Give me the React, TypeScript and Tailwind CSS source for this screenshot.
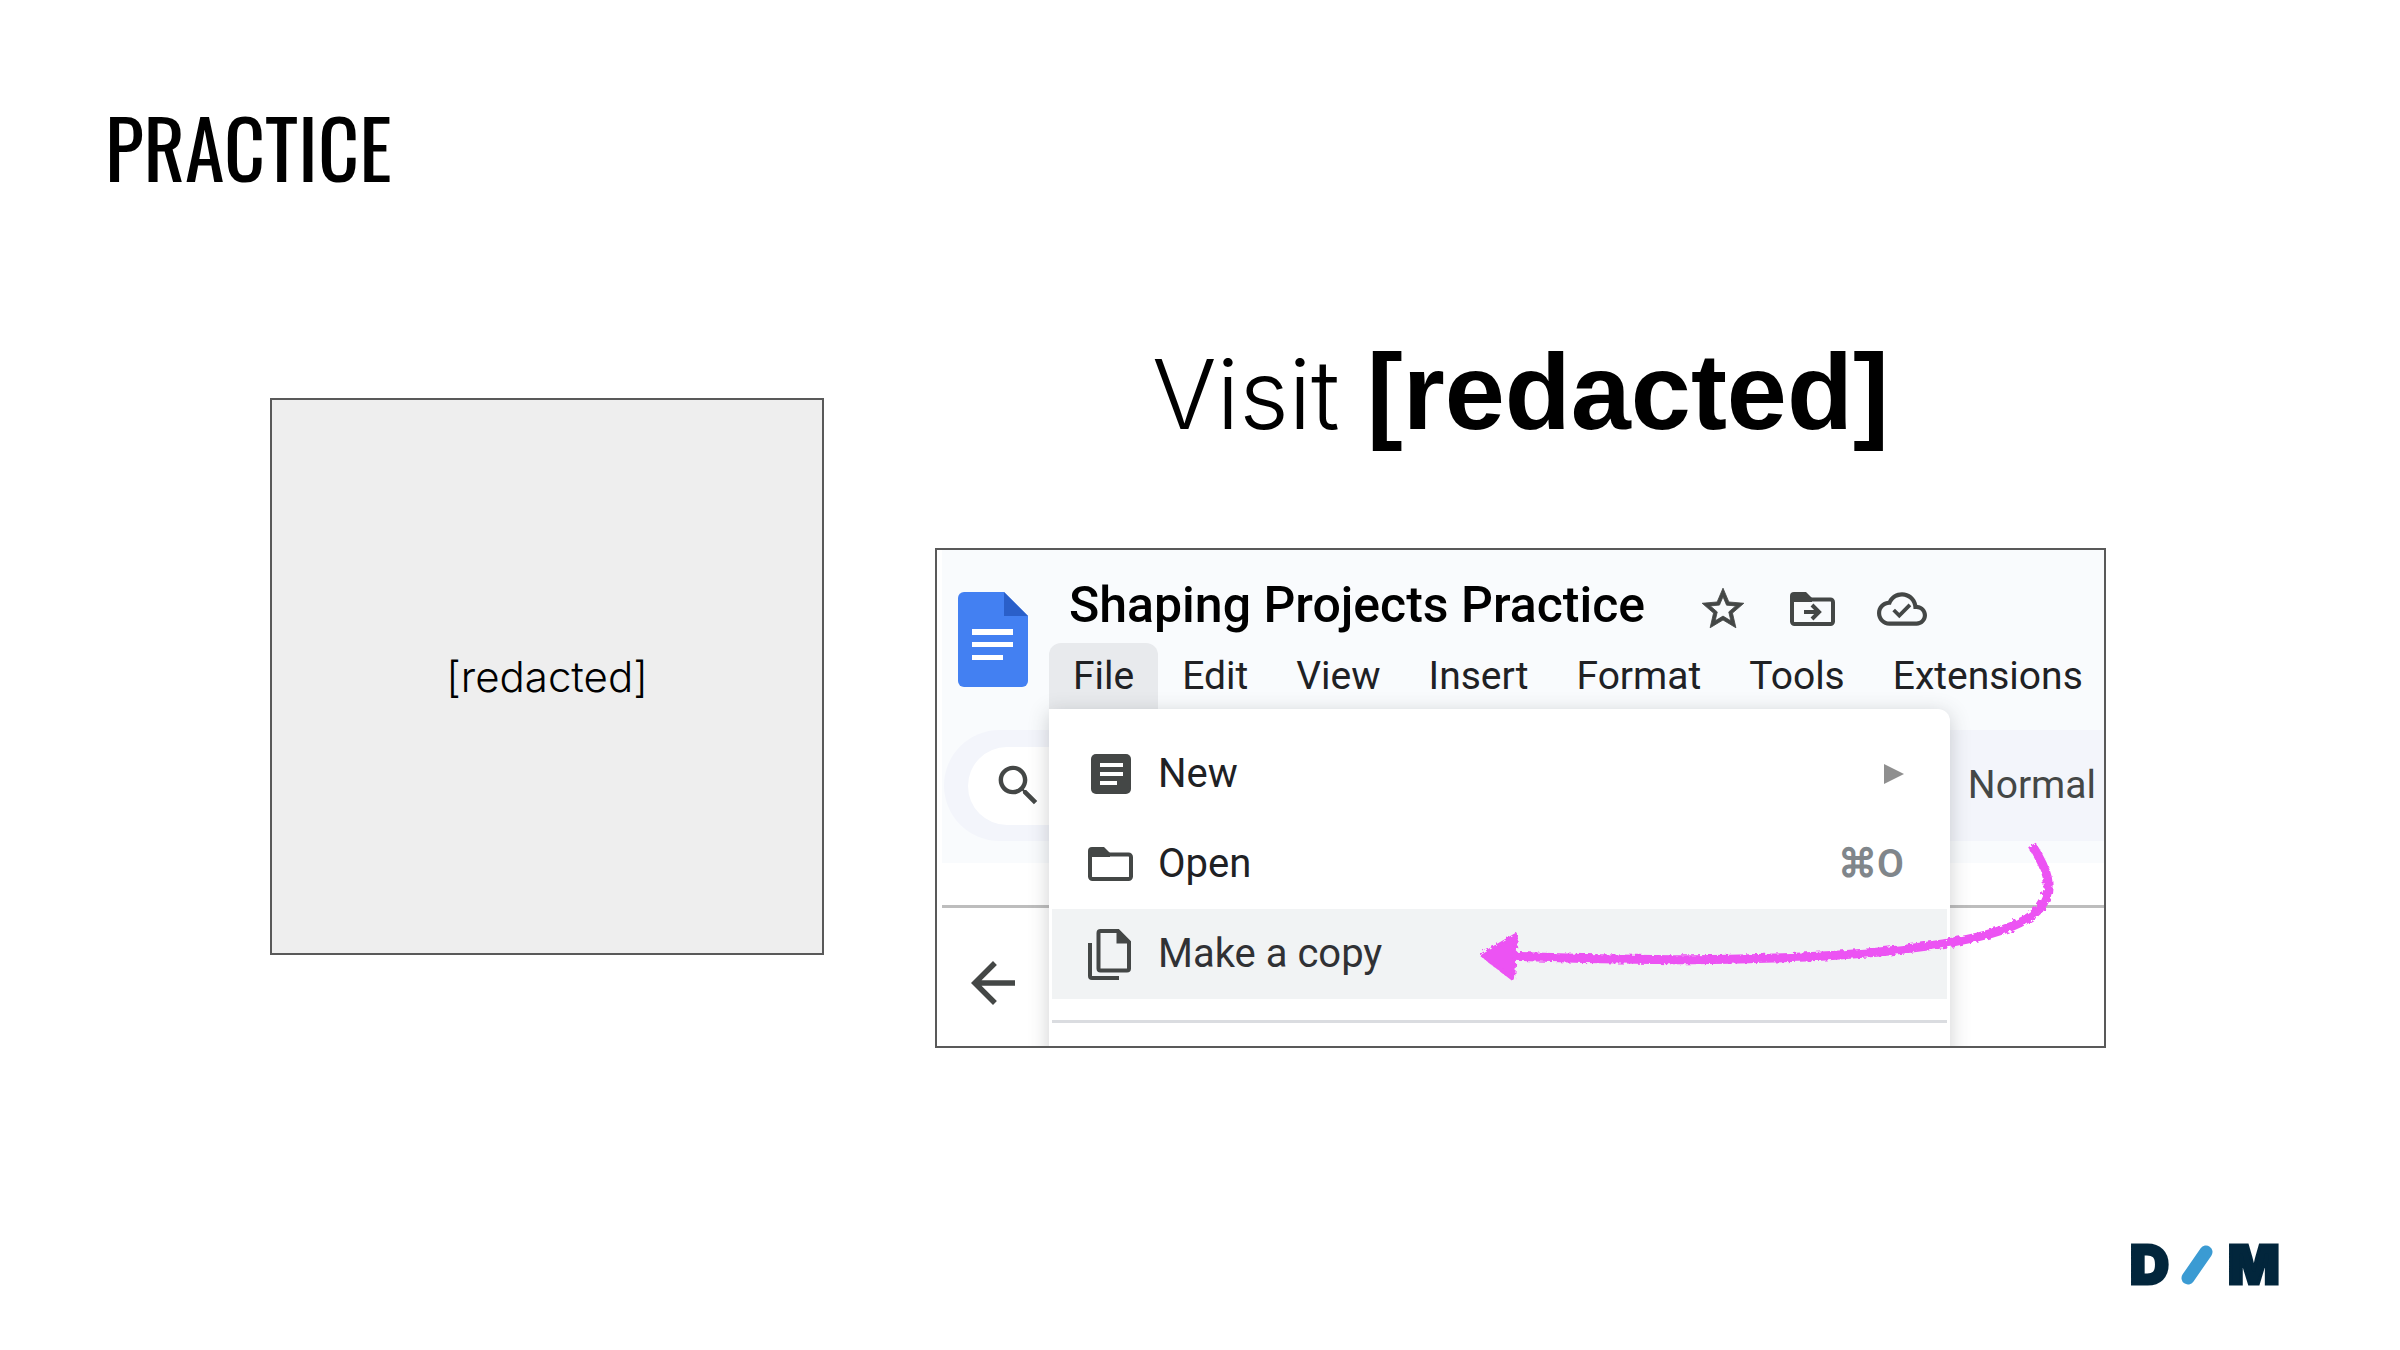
const MENUS = ["File", "Edit", "View", "Insert", "Format", "Tools", "Extensions"];

function DocsLogo() {
  return (
    <svg width="70" height="95" viewBox="0 0 70 95" aria-hidden="true">
      <path d="M6 0H46L70 24V89a6 6 0 0 1-6 6H6a6 6 0 0 1-6-6V6a6 6 0 0 1 6-6Z" fill="#4380f2" />
      <path d="M46 0 70 24H46Z" fill="#2a5fc9" />
      <path d="M14 37h41v6H14zM14 50h41v5H14zM14 63h31v5H14z" fill="#fff" />
    </svg>
  );
}

function StarIcon() {
  return (
    <svg width="50" height="50" viewBox="0 0 24 24" fill="#444746" stroke="#444746" strokeWidth="0.4" aria-hidden="true">
      <path d="M22 9.24l-7.19-.62L12 2 9.19 8.63 2 9.24l5.46 4.73L5.82 21 12 17.27 18.18 21l-1.63-7.03L22 9.24zM12 15.4l-3.76 2.27 1-4.28-3.32-2.88 4.38-.38L12 6.1l1.71 4.04 4.38.38-3.32 2.88 1 4.28L12 15.4z" />
    </svg>
  );
}

function FolderIcon({ move = false }: { move?: boolean }) {
  return (
    <svg width="45" height="34" viewBox="0 0 45 34" fill="none" aria-hidden="true">
      <path d="M0 10V4a4 4 0 0 1 4-4h12l6 6v4Z" fill="#444746" />
      <rect x="2" y="7.500" width="41" height="24.500" rx="2.500" stroke="#444746" strokeWidth="4" />
      {move && (
        <path d="M14 20h14M22 13l7 7-7 7" stroke="#444746" strokeWidth="4" />
      )}
    </svg>
  );
}

function CloudIcon() {
  return (
    <svg width="50" height="50" viewBox="0 0 24 24" fill="#444746" aria-hidden="true">
      <path d="M19.350 10.040C18.670 6.590 15.640 4 12 4 9.110 4 6.600 5.640 5.350 8.040 2.340 8.360 0 10.910 0 14c0 3.310 2.690 6 6 6h13c2.760 0 5-2.240 5-5 0-2.640-2.050-4.780-4.650-4.960zM19 18H6c-2.210 0-4-1.790-4-4s1.790-4 4-4h.71C7.370 7.690 9.480 6 12 6c3.040 0 5.500 2.460 5.500 5.500v.5H19c1.660 0 3 1.340 3 3s-1.340 3-3 3z" />
      <path d="M8 12.500 10.700 15.200 15.800 10" fill="none" stroke="#444746" strokeWidth="1.800" />
    </svg>
  );
}

function SearchIcon() {
  return (
    <svg width="53" height="53" viewBox="0 0 24 24" fill="#444746" aria-hidden="true">
      <path d="M15.500 14h-.79l-.28-.27C15.410 12.590 16 11.110 16 9.500 16 5.910 13.090 3 9.500 3S3 5.910 3 9.500 5.910 16 9.500 16c1.610 0 3.090-.59 4.230-1.570l.27.28v.79l5 4.990L20.490 19l-4.990-5zm-6 0C7.010 14 5 11.990 5 9.500S7.010 5 9.500 5 14 7.010 14 9.500 11.990 14 9.500 14z" />
    </svg>
  );
}

function BackIcon() {
  return (
    <svg width="44" height="44" viewBox="4 4 16 16" fill="#444746" aria-hidden="true">
      <path d="M20 11H7.830l5.590-5.590L12 4l-8 8 8 8 1.410-1.410L7.830 13H20v-2z" />
    </svg>
  );
}

function NewIcon() {
  return (
    <svg width="40" height="40" viewBox="0 0 40 40" aria-hidden="true">
      <rect width="40" height="40" rx="5" fill="#444746" />
      <path d="M9 9h23v4H9zM9 18h23v4H9zM9 27h17v4H9z" fill="#fff" />
    </svg>
  );
}

function CopyIcon() {
  return (
    <svg width="43" height="51" viewBox="0 0 43 51" fill="none" stroke="#444746" strokeWidth="4" aria-hidden="true">
      <path d="M12.500 2H30l11 11v26.500a2 2 0 0 1-2 2H12.500a2 2 0 0 1-2-2V4a2 2 0 0 1 2-2Z" />
      <path d="M28.500 1v13.500H42Z" fill="#444746" stroke="none" />
      <path d="M2 14v33a2 2 0 0 0 2 2h27" />
    </svg>
  );
}

function SketchArrow() {
  return (
    <svg className="pointer-events-none absolute inset-0" width="1167" height="496" viewBox="937 550 1167 496" aria-hidden="true">
      <filter id="crayon" x="-5%" y="-10%" width="110%" height="120%">
        <feTurbulence type="fractalNoise" baseFrequency="0.25" numOctaves="2" seed="4" result="noise" />
        <feDisplacementMap in="SourceGraphic" in2="noise" scale="5" />
      </filter>
      <g filter="url(#crayon)">
        <path
          d="M2032 845C2046 868 2056 887 2040 908C2020 932 1960 943 1889 951C1790 961 1640 962 1510 956"
          fill="none"
          stroke="#ec52f3"
          strokeWidth="9"
        />
        <path d="M1482 955 1516 935 1513 979Z" fill="#ec52f3" stroke="#ec52f3" strokeWidth="4" strokeLinejoin="round" />
      </g>
    </svg>
  );
}

function FileMenu() {
  return (
    <div
      role="menu"
      className="absolute top-[159px] left-[112px] h-[400px] w-[901px] rounded-tr-xl bg-white px-[3px] pt-5 text-[40px] text-[#202124] shadow-[0_4px_20px_rgba(60,64,67,0.25)]"
    >
      <button role="menuitem" className="flex h-[90px] w-full items-center pr-[43px] pl-9">
        <span className="flex w-[70px] pl-[3px]"><NewIcon /></span>
        New
        <svg className="ml-auto" width="20" height="20" viewBox="0 0 20 20" aria-hidden="true">
          <path d="M0 0 20 10 0 20Z" fill="#8f8f8f" />
        </svg>
      </button>
      <button role="menuitem" className="flex h-[90px] w-full items-center pr-[43px] pl-9">
        <span className="flex w-[70px]"><FolderIcon /></span>
        Open
        <span className="ml-auto text-[39px] font-semibold text-[#80868b]">⌘O</span>
      </button>
      <button role="menuitem" className="flex h-[90px] w-full items-center bg-[#f1f3f4] pr-[43px] pl-9 text-[#303134]">
        <span className="flex w-[70px]"><CopyIcon /></span>
        Make a copy
      </button>
      <hr className="mt-[21px] border-t-[3px] border-[#dadce0]" />
    </div>
  );
}

function DocsWindow() {
  return (
    <div className="relative h-[500px] w-full overflow-hidden border-2 border-[#595959] bg-white font-[Roboto,sans-serif]">
      <div className="ml-[5px] bg-[#f9fbfd] pb-[22px]">
        <div className="flex pl-4">
          <div className="mr-[21px] shrink-0 pt-[42px]">
            <DocsLogo />
          </div>
          <div>
            <div className="flex h-[93px] items-center pt-6 pl-5">
              <h2 className="pb-2 text-[50px] leading-[60px] font-medium whitespace-nowrap text-black">
                Shaping Projects Practice
              </h2>
              <div className="ml-auto flex items-center gap-[42px] pr-[180px]">
                <button aria-label="Star"><StarIcon /></button>
                <button aria-label="Move"><FolderIcon move /></button>
                <button aria-label="Saved to Drive"><CloudIcon /></button>
              </div>
            </div>
            <nav className="flex text-[39px] text-[#202124]">
              {MENUS.map((name) => (
                <button
                  key={name}
                  className={name === "File" ? "h-[66px] rounded-t-xl bg-[#e8eaed] px-6" : "h-[66px] px-6"}
                >
                  {name}
                </button>
              ))}
            </nav>
          </div>
        </div>
        <div className="mt-[21px] ml-0.5 flex h-[111px] items-center rounded-l-full bg-[#f3f5fb] pr-2 pl-6">
          <button aria-label="Search" className="flex h-[78px] w-[200px] items-center rounded-l-full bg-white pl-6">
            <SearchIcon />
          </button>
          <span className="ml-auto text-[39px] text-[#444746]">Normal</span>
        </div>
      </div>
      <div className="mt-[42px] ml-[5px] border-t-[3px] border-[#bdbdbd] pt-[53px] pl-[29px]">
        <button aria-label="Back" className="block">
          <BackIcon />
        </button>
      </div>
      <FileMenu />
      <SketchArrow />
    </div>
  );
}

function BrandLogo() {
  return (
    <svg width="170" height="70" viewBox="0 -14 170 70" role="img" aria-label="D/M">
      <g className="font-[Inter,sans-serif]" fontSize="54" fontWeight="900" fill="#02263c" stroke="#02263c" strokeWidth="3">
        <text x="8" y="40">D</text>
        <text x="106" y="40">M</text>
      </g>
      <path d="M66 34 84 8" stroke="#3b9bd3" strokeWidth="13" strokeLinecap="round" />
    </svg>
  );
}

export default function App() {
  return (
    <main className="flex min-h-screen flex-col bg-white text-black">
      <h1 className="pt-[86px] pl-[105px] font-['Oswald','Roboto_Condensed','Liberation_Sans_Narrow',sans-serif] text-[80px] leading-[120px]">
        PRACTICE
      </h1>
      <div className="mt-28 grid grid-cols-[554fr_1171fr] items-start gap-[111px] pr-[294px] pl-[270px]">
        <div className="mt-20 flex h-[557px] items-center justify-center border-2 border-[#595959] bg-[#eeeeee]">
          <p className="font-[Inter,sans-serif] text-[42px] font-light">[redacted]</p>
        </div>
        <div className="flex min-w-0 flex-col items-center">
          <p className="mb-[84px] text-[108px] leading-[140px] whitespace-nowrap">
            <span className="font-[Inter,sans-serif] text-[96px] font-light">Visit </span>
            <strong className="font-['Liberation_Sans',sans-serif] font-bold">[redacted]</strong>
          </p>
          <DocsWindow />
        </div>
      </div>
      <footer className="mt-auto flex justify-end pr-[108px] pb-[50px]">
        <BrandLogo />
      </footer>
    </main>
  );
}
